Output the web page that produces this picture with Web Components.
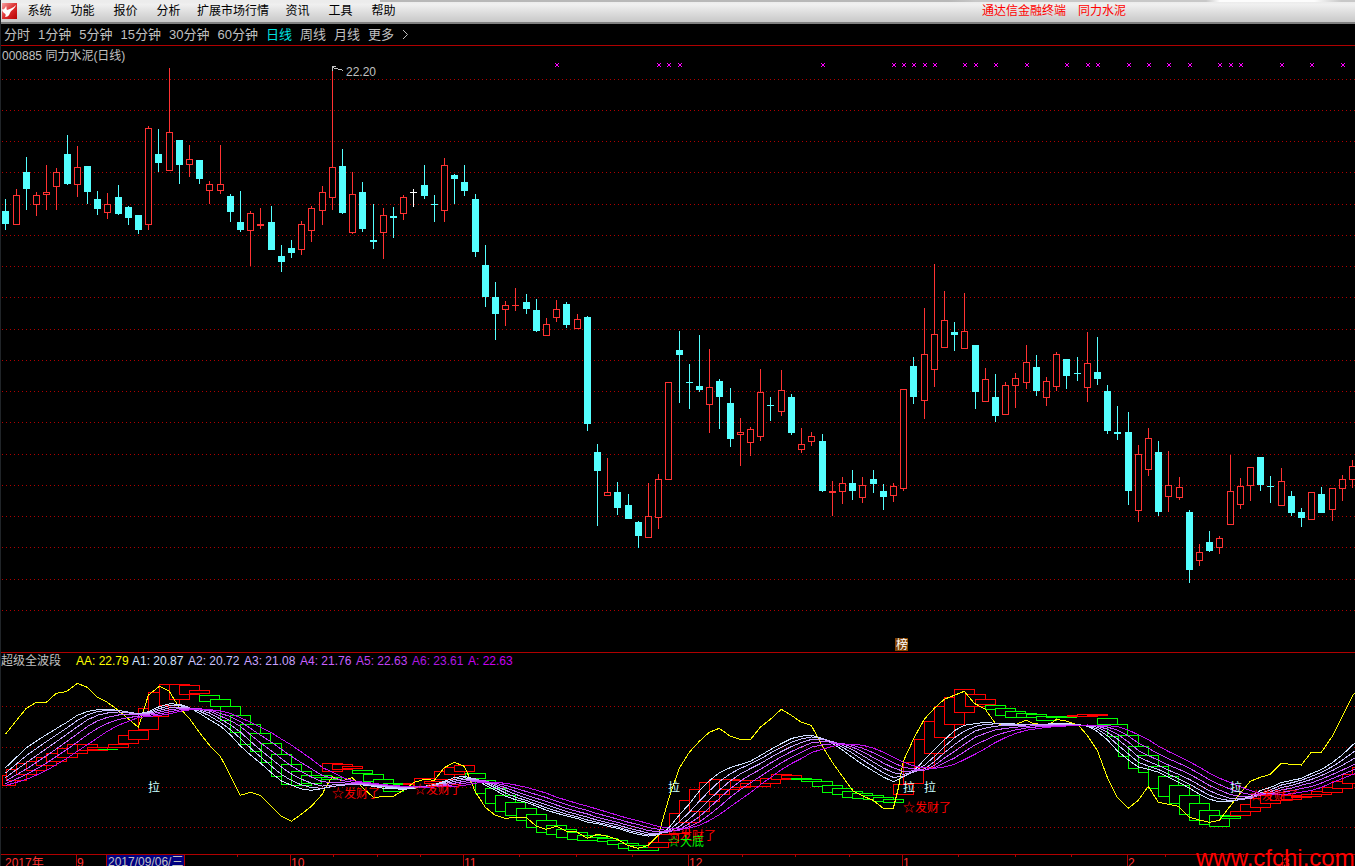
<!DOCTYPE html>
<html lang="zh-CN">
<head>
<meta charset="utf-8">
<title>同力水泥 日线</title>
<style>
html,body{margin:0;height:100%}
body{background:#000;overflow:hidden;font:12px/16px "Liberation Sans","Noto Sans CJK SC",sans-serif;color:#c0c0c0}
</style>
</head>
<body>
<stock-terminal></stock-terminal>

<template id="t-terminal">
<style>
:host{display:flex;flex-direction:column;height:100vh;box-sizing:border-box;border-left:1px solid #202428;overflow:hidden}
main{display:flex;flex-direction:column;flex:1;min-height:0}
kline-pane{flex:none}
wave-pane{flex:1;min-height:0}
</style>
<menu-bar>
  <menu-item>系统</menu-item><menu-item>功能</menu-item><menu-item>报价</menu-item><menu-item>分析</menu-item><menu-item>扩展市场行情</menu-item><menu-item>资讯</menu-item><menu-item>工具</menu-item><menu-item>帮助</menu-item>
  <span slot="title">通达信金融终端</span><span slot="title">同力水泥</span>
</menu-bar>
<period-bar>
  <period-item>分时</period-item><period-item>1分钟</period-item><period-item>5分钟</period-item><period-item>15分钟</period-item><period-item>30分钟</period-item><period-item>60分钟</period-item><period-item active>日线</period-item><period-item>周线</period-item><period-item>月线</period-item><period-item more>更多</period-item>
</period-bar>
<main>
  <kline-pane>000885 同力水泥(日线)</kline-pane>
  <wave-pane>超级全波段</wave-pane>
</main>
</template>

<template id="t-menu">
<style>
:host{display:flex;flex:none;height:24px;box-sizing:border-box;align-items:center;color:#000;border-bottom:2px solid #808080;background:linear-gradient(90deg,#ececec 28%,#b8b8b8 28%,#b8b8b8 70%,#c8c8c8 72%,#c8c8c8 89%,#fcfcfc 90%,#fcfcfc 97%,#c8c8c8 99%) 0 0/100% 2px no-repeat,linear-gradient(#e8e8e8,#f0f0f0 20%,#dcdcdc 60%,#c8c8c8)}
svg{flex:none;width:16px;height:16px;margin-right:1px}
nav{display:flex;flex:1}
.title{display:flex;gap:12px;color:#f00;margin-right:229px;white-space:nowrap}
</style>
<svg viewBox="0 0 16 16" aria-hidden="true"><defs><linearGradient id="lg" x1="0" y1="0" x2="1" y2="1"><stop offset="0" stop-color="#f7a0a0"/><stop offset=".5" stop-color="#dc3030"/><stop offset="1" stop-color="#b80000"/></linearGradient></defs><rect x="1" width="15" height="16" fill="url(#lg)"/><path d="M1 6c1 1 3 0 4-3 1 1 0 3 1 4 3-1 6-2 9-5-1 4-5 5-6 8-1 3-3 4-5 4 1-2 1-3-1-4-1-1-2-2-2-4z" fill="#fff"/></svg>
<nav><slot></slot></nav><div class="title"><slot name="title"></slot></div>
</template>

<template id="t-menuitem">
<style>
:host{display:block}
button{font:inherit;color:inherit;background:none;border:0;margin:0;padding:0 7px;min-width:43px;height:22px;white-space:nowrap}
</style><button type="button"><slot></slot></button>
</template>

<template id="t-period">
<style>
:host{display:flex;flex:none;height:22px;box-sizing:border-box;border-bottom:1px solid #b00000;font-size:13px;padding-left:3px;gap:8px;align-items:center}
</style><slot></slot>
</template>

<template id="t-perioditem">
<style>
:host{display:block}
:host([active]){color:#00e0e0}
button{display:flex;align-items:center;gap:8px;font:inherit;color:inherit;background:none;border:0;margin:0;padding:0;height:20px;white-space:nowrap}
svg{display:none}
:host([more]) svg{display:block}
</style><button type="button"><slot></slot><svg width="7" height="11" viewBox="0 0 7 11" fill="none" stroke="#c0c0c0" aria-hidden="true"><path d="M1 1l4.500 4.500L1 10"/></svg></button>
</template>

<template id="t-kline">
<style>
:host{display:grid;overflow:hidden}
h1{grid-area:1/1;margin:2px 1px;font:inherit;align-self:start;z-index:1}
svg{grid-area:1/1;width:100%;height:606px;display:block;font:inherit}
</style><h1><slot></slot></h1><svg role="img" aria-label="K线图"></svg>
</template>

<template id="t-wave">
<style>
:host{display:grid;grid-template-rows:minmax(0,1fr);overflow:hidden;border-top:1px solid #b00000}
header{grid-area:1/1;display:flex;align-self:start;z-index:1;white-space:nowrap}
h2{margin:0;font:inherit;width:75px}
span{width:56px}
svg{grid-area:1/1;width:100%;height:100%;display:block;font:inherit}
</style><header><h2><slot></slot></h2></header><svg role="img" aria-label="超级全波段指标"></svg>
</template>

<script>
const tpl = id => document.getElementById(id).content.cloneNode(true);
const define = (name, id, ready) => customElements.define(name, class extends HTMLElement {
  constructor() {
    super();
    const root = this.attachShadow({ mode: 'open' });
    root.append(tpl(id));
    if (ready) ready(root);
  }
});

// Column centre of trading day i.
const dayX = i => Math.round(5.3 + 10.2026 * i);
const dots = ys => ys.map(y => `<line x1="2" x2="101%" y1="${y}.5" y2="${y}.5" stroke="#b00000" stroke-dasharray="1 3"/>`).join('');

// One candle per entry: kind (c fall, r rise, w flat), high, body top, body bottom, low.
const candles = `c199,211,224,230 r189,195,225,225 c157,172,189,210 r192,195,205,216 r165,192,195,210 r168,172,187,210 c135,154,184,185 r146,167,185,197 c166,166,192,204 c191,199,209,215
r193,204,213,219 c185,197,214,215 c206,207,218,225 c215,215,230,234 r126,128,225,230 c129,154,163,172 r68,132,171,171 c140,140,165,184 r145,159,165,177 c160,160,179,184
r181,184,191,204 r145,184,191,194 c194,196,212,222 c191,222,230,232 r211,213,231,266 r208,224,226,229 c206,222,250,250 c245,256,262,272 c240,248,253,258 r221,224,250,255
r206,208,231,242 r186,192,211,225 r66,167,198,210 c149,166,213,214 r172,194,233,234 c182,192,229,232 c204,240,242,249 r208,215,233,259 c207,216,218,238 r195,197,214,220
w189,192,193,207 c165,185,196,199 c195,204,205,222 r158,165,211,222 c174,175,179,204 c165,182,191,196 c194,199,252,257 c245,265,297,307 c282,297,314,340 r301,305,310,326
r288,305,306,311 c294,302,309,314 c299,310,331,332 r318,324,336,336 r300,309,318,322 c302,304,325,328 r314,319,329,329 c316,317,424,431 c444,452,471,526 r458,492,496,496
c482,492,508,515 c494,505,519,519 c521,522,536,548 r483,516,538,538 r474,479,518,529 r382,382,480,480 c331,350,355,403 c364,382,383,409 c335,386,390,392 r349,387,405,433
c379,381,397,429 c388,403,439,447 r418,432,435,466 r427,429,443,456 r369,392,437,441 c397,405,406,421 r370,390,412,416 c394,397,433,435 r428,444,450,453 r432,436,442,446
c434,441,491,492 r481,491,493,516 r477,483,492,504 c470,483,491,500 r477,485,498,503 c470,479,484,493 c484,491,497,510 r483,486,496,502 r389,389,489,491 c357,366,397,404
r308,354,401,419 r264,334,370,387 r291,320,348,348 c322,332,335,351 r293,331,349,349 c345,345,392,409 r368,379,402,402 c374,397,416,422 r382,385,415,415 r373,378,386,408
r345,362,383,389 c355,367,391,396 r377,381,398,406 r352,354,387,391 c359,359,376,389 c357,373,374,381 r332,363,388,402 c337,372,379,385 c385,391,431,434 c406,432,434,440
c412,432,491,505 r445,454,511,522 r428,438,470,476 c441,452,512,516 r451,485,497,512 r477,487,498,500 c510,512,570,583 r544,552,561,566 c531,542,551,552 r536,538,548,554
r455,491,525,525 r478,486,505,509 r467,467,486,501 c457,457,485,491 c476,486,487,503 r468,481,506,506 c491,496,513,516 c508,512,518,527 r492,492,520,520 c487,494,513,513
r488,488,510,521 r475,479,489,501 r460,466,480,488`.split(/\s+/).map(s => [s[0], ...s.slice(1).split(',').map(Number)]);
const tint = { c: '#54ffff', r: '#ff3232', w: '#ffffff' };
const marks = [54,64,65,66,80,87,88,89,90,91,94,95,97,100,104,106,107,110,112,114,116,119,120,121,125,128,131];

function drawKline(root) {
  let s = dots([79,110,141,172,204,235,266,297,329,360,391,422,454,485,516,547,579,610]);
  candles.forEach(([k, hi, top, bot, lo], i) => {
    const x = dayX(i), col = tint[k];
    if (k === 'r' && bot - top > 2) {
      s += `<path d="M${x + .5} ${hi}V${top}M${x + .5} ${bot}V${lo}" stroke="${col}"/><rect x="${x - 2.5}" y="${top + .5}" width="6" height="${bot - top - 1}" fill="#000" stroke="${col}"/>`;
    } else {
      s += `<path d="M${x + .5} ${hi}V${lo}" stroke="${col}"/><rect x="${x - 3}" y="${top}" width="7" height="${bot - top}" fill="${col}"/>`;
    }
  });
  for (const i of marks) s += `<path d="M${dayX(i) - 1} 63h1v1h2v-1h1v1h-1v2h1v1h-1v-1h-2v1h-1v-1h1v-2h-1z" fill="#ff00ff"/>`;
  s += `<path d="M343.500 70.500L332.500 67.500M332.500 71V66.500H336" fill="none" stroke="#c0c0c0"/><text x="346" y="76" fill="#c0c0c0">22.20</text>`;
  s += `<rect x="895" y="638" width="13" height="13" fill="#804000"/><text x="896" y="649" fill="#fff">榜</text>`;
  root.querySelector('svg').innerHTML = `<g transform="translate(-1,-46)" shape-rendering="crispEdges">${s}</g>`;
}

// Wave tables are kept at three units per pixel; ox/oy place each section.
const sections = [
  { ox: 0, oy: 1935,
    aa: '16,268 79,190 109,172 139,172 169,145 199,140 232,115 262,127 292,157 322,172 355,196 415,247 430,200 445,151 478,124 508,139 538,188 568,220 600,265 631,304 661,334 691,391 721,451 751,442 781,451 811,481 844,514 874,529 904,508 934,484 967,448',
    f: '16,367 79,307 139,268 199,232 232,210 262,199 292,194 340,193 370,199 415,207 445,200 478,184 508,176 540,178 580,193 620,220 661,244 691,271 721,304 751,331 781,355 811,382 844,409 874,421 904,432 934,436',
    m: '16,397 79,352 139,310 199,268 232,244 262,224 292,210 340,200 370,202 415,208 445,205 478,196 508,188 540,186 580,190 620,200 661,223 691,240 721,262 751,290 781,316 811,340 844,367 874,388 904,403 934,415',
    l: '16,421 79,403 139,376 199,340 262,298 322,258 355,240 415,217 445,214 478,211 508,207 540,198 580,193 620,193 661,198 691,205 721,219 751,232 781,247 811,262 844,283 874,301 904,322 934,343',
    red: '6,391,46,421 19,373,79,406 49,355,109,388 79,349,139,376 109,337,169,361 139,325,199,349 172,310,232,337 202,298,262,325 232,298,292,316 262,307,322,316 262,313,322,316 325,298,385,307 355,271,415,295 385,256,445,283 415,190,475,253 445,142,505,214 478,118,538,181 508,118,568,163 538,121,598,148 568,136,628,145',
    green: '292,313,352,313 598,151,658,169 631,163,691,184 661,184,721,226 691,211,751,262 721,238,781,298 751,265,811,319 784,295,844,352 814,328,874,394 844,358,904,418 874,379,934,421 904,391,964,415 934,391,994,397 964,397,1024,403' },
  { ox: 960, oy: 1935,
    aa: '15,430 37,395 67,408 97,398 130,430 160,457 220,454 250,436 283,412 313,403 343,406 373,368 403,352 433,364 448,397 466,440 496,487 526,511 556,520 590,517 619,517 649,544 679,553 709,544 739,559 769,560 802,580 832,568 862,574 892,583 922,601 955,610',
    f: '0,432 37,424 67,421 97,417 130,420 160,424 190,430 250,433 283,430 313,424 343,418 373,409 403,397 433,394 466,403 496,421 526,436 556,454 590,466 619,472 649,484 679,496 709,505 739,513 769,520 802,532 832,536 862,544 892,550 922,560',
    m: '0,424 37,420 67,418 130,417 160,420 250,428 313,424 343,422 373,416 403,409 433,403 466,403 496,410 526,424 556,436 590,450 619,460 649,470 679,480 709,490 739,500 769,508 802,517 832,526 862,533 892,540 922,549',
    l: '0,365 37,382 67,398 97,407 130,412 160,415 190,419 250,424 313,427 373,425 403,424 433,421 466,414 496,412 526,412 556,415 590,421 619,427 649,436 679,445 709,457 739,466 769,475 802,484 832,493 862,502 892,511 922,520',
    red: '7,355,67,379 37,358,97,373 67,364,127,370 250,415,310,418 283,400,343,424 313,409,373,415 343,379,403,403 373,367,433,388 403,361,463,379',
    green: '97,376,157,385 130,388,190,409 160,403,220,418 190,415,250,439 220,418,280,430 436,385,496,400 466,406,526,445 496,430,556,475 526,451,586,499 556,472,616,511 589,490,649,526 619,508,679,547 649,526,709,562 679,541,739,568 709,553,769,577 742,562,802,583 772,571,832,586 802,571,862,577 832,580,892,589 862,586,922,598 895,595,955,610 925,601,985,616 955,607,1015,616' },
  { ox: 1920, oy: 1935,
    aa: '25,601 55,571 61,550 88,455 118,370 148,322 178,289 208,262 238,250 271,274 301,283 331,284 361,247 391,223 424,193 454,211 484,232 514,241 544,298 577,352 607,394 640,439 670,454 700,466 730,490 760,490 775,430 790,349 823,277 853,223 883,190 913,163 943,151 973,139',
    f: '0,570 30,574 60,568 88,547 118,508 148,475 178,436 208,406 238,382 271,367 301,358 331,348 361,331 391,313 424,295 454,280 484,273 514,271 544,280 577,295 607,316 640,340 670,361 700,379 730,397 760,411 790,395 823,376 853,343 883,313 913,283 943,256 973,240',
    m: '0,558 30,566 60,564 88,560 118,544 148,520 178,493 208,463 238,434 271,406 301,386 331,370 361,355 391,337 424,319 454,304 484,292 514,283 544,283 577,290 607,301 640,316 670,334 700,352 730,370 760,384 790,388 823,380 853,371 883,349 913,322 943,298 973,277',
    l: '0,529 30,538 60,546 88,550 118,552 148,549 178,541 208,526 238,508 271,484 301,463 331,442 361,418 391,397 424,373 454,355 484,340 514,322 544,313 577,304 607,297 640,298 670,301 700,310 730,322 760,337 790,352 823,364 853,369 883,370 913,366 943,358 973,343',
    red: '55,568,115,592 25,592,85,607 88,505,148,565 118,466,178,532 148,433,208,499 178,412,238,469 208,403,268,448 238,403,298,433 271,406,331,427 301,415,361,424 331,406,391,424 361,400,421,415 394,388,454,403 424,391,484,400 760,418,820,448 790,352,850,415 823,283,883,367 853,229,913,325 883,184,943,277 913,157,973,238 943,133,1003,202 976,148,1036,184 1006,163,1066,178',
    green: '454,400,514,403 484,403,544,409 517,409,577,424 547,421,607,442 577,430,637,448 607,439,667,457 637,445,697,460 670,451,730,463 700,457,760,469 730,463,790,472' },
  { ox: 2580, oy: 1890,
    aa: '343,220 376,238 406,280 436,286 450,286 469,283 499,270 520,281 568,284 589,268 622,274 655,286',
    f: '343,281 376,277 406,280 466,282 530,283 570,282 600,280 655,283',
    m: '343,303 376,294 406,288 466,286 530,284 600,284 655,285',
    l: '343,373 376,355 406,337 436,322 466,310 496,301 530,296 560,292 600,289 655,286',
    red: '622,256,682,259 652,253,712,259 682,253,742,256',
    green: '376,226,436,238 406,235,466,256 436,244,496,262 469,250,529,262 499,253,559,262 529,259,589,271 559,259,619,262 592,259,650,262' },
  { ox: 3240, oy: 1935,
    aa: '22,271 52,316 82,397 112,457 145,490 175,466 205,424 235,472 265,478 295,484 328,517 358,525 388,532 418,526 448,487 478,448 511,409 541,397 571,388 604,355 634,358 664,360 694,322 724,322 757,274 787,214 820,148 830,140',
    f: '22,244 52,260 82,286 112,319 145,346 175,367 205,373 235,382 265,397 295,412 328,430 358,448 388,463 418,471 448,470 478,463 511,454 541,436 571,427 604,412 634,406 664,400 694,385 724,373 757,352 787,328 825,292',
    m: '22,242 52,247 82,262 112,283 145,310 175,337 205,350 235,362 265,376 295,388 328,404 358,421 388,438 418,450 448,460 478,462 511,460 541,448 571,440 604,427 634,421 664,412 694,403 724,391 757,376 787,360 825,338',
    l: '22,240 52,241 82,242 112,245 145,256 175,270 205,285 235,304 265,320 295,334 328,351 358,367 388,385 418,400 448,412 478,425 511,437 541,446 571,450 604,449 634,446 664,441 694,436 724,427 757,412 787,400 825,385',
    red: '451,499,511,511 481,478,541,499 511,460,571,487 541,451,601,475 571,448,631,466 604,451,664,463 634,454,694,457 664,448,724,454 694,439,754,448 727,427,787,442 757,409,817,430 787,388,847,415 817,367,877,388',
    green: '52,220,112,238 82,238,142,274 115,271,175,334 145,304,205,370 175,331,235,382 205,364,265,430 235,394,295,454 268,421,328,475 298,451,358,508 328,475,388,526 358,496,418,538 388,511,448,544 421,514,481,520' }
];
const series = key => sections.flatMap(c => c[key].split(' ').map(p => p.split(',').map(Number)).map(([x, y]) => [(x + c.ox) / 3, (y + c.oy) / 3]));
const boxes = key => sections.flatMap(c => c[key].split(' ').map(p => p.split(',').map(Number)).map(([a, b, d, e]) => [Math.floor((a + c.ox) / 3), Math.floor((b + c.oy) / 3), Math.floor((d + c.ox) / 3), Math.floor((e + c.oy) / 3)]));
const at = (pts, x) => {
  let j = 1;
  while (j < pts.length - 1 && pts[j][0] < x) j++;
  const [x0, y0] = pts[j - 1], [x1, y1] = pts[j];
  return y0 + (y1 - y0) * (x - x0) / (x1 - x0);
};
const readings = [['AA: 22.79', '#ffff00'], ['A1: 20.87', '#d0e0ff'], ['A2: 20.72', '#c8c0ff'], ['A3: 21.08', '#c8a0ff'], ['A4: 21.76', '#c860ff'], ['A5: 22.63', '#c040f0'], ['A6: 23.61', '#b018e0'], ['A: 22.63', '#c800f0']];
const lineTint = ['#d0e0ff', '#c8c0ff', '#c8a0ff', '#c860ff', '#c840ff', '#c010f0'];

function drawWave(root) {
  const header = root.querySelector('header');
  for (const [t, c] of readings) {
    const e = document.createElement('span');
    e.textContent = t; e.style.color = c; header.append(e);
  }
  let s = dots([706, 747, 787, 827]);
  // Each step box covers the earlier ones it overlaps.
  const steps = [...boxes('red').map(b => [...b, '#ff0000']), ...boxes('green').map(b => [...b, '#00ff00'])].sort((p, q) => p[0] - q[0]);
  for (const [a, b, d, e, col] of steps) s += `<path fill="#000" stroke="${col}" d="M${a + .5} ${b + .5}H${d + .5}V${e + .5}H${a + .5}Z"/>`;
  s += `<polyline fill="none" stroke="#ffff00" points="${series('aa').map(p => p.map(v => v.toFixed(1))).join(' ')}"/>`;
  const f = series('f'), m = series('m'), l = series('l');
  for (let k = 0; k < 6; k++) {
    const t = k / 5, pts = [];
    for (let i = 0; i < 134; i++) {
      const x = dayX(i), a = at(f, x), b = at(m, x), c = at(l, x);
      const y = a * (t - .4) * (t - 1) / .4 + b * t * (t - 1) / -.24 + c * t * (t - .4) / .6;
      pts.push(x + '.5,' + y.toFixed(1));
    }
    s += `<polyline fill="none" stroke="${lineTint[k]}" points="${pts.join(' ')}"/>`;
  }
  const say = (x, y, c, t) => { s += `<text x="${x}" y="${y}" fill="${c}">${t}</text>`; };
  for (const x of [148, 668, 903, 924, 1230]) say(x, 792, '#ccffff', '拉');
  for (const [x, y] of [[332, 798], [414, 794], [668, 840], [903, 812], [1250, 800]]) say(x, y, '#ff0000', '☆发财了');
  say(668, 846, '#00ff00', '☆大底');
  s += `<path stroke="#b00000" d="M0 854.500H4000${[76, 290, 463, 688, 902, 1127, 1282].map(x => `M${x}.5 855V900`).join('')}${[237, 333, 377, 420, 519, 576, 632, 742, 795, 849, 958, 1015, 1071, 1165, 1204, 1243, 1336].map(x => `M${x}.5 855V857`).join('')}"/>`;
  s += `<rect x="106.500" y="854.500" width="78" height="20" fill="#000080" stroke="#b00000"/>`;
  for (const [x, t] of [[5, '2017年'], [77, '9'], [291, '10'], [464, '11'], [689, '12'], [903, '1'], [1128, '2'], [1283, '3']]) say(x, 867, '#ff3232', t);
  say(108, 866, '#c0c0c0', '2017/09/06/三');
  s += `<text x="1196" y="866" fill="#ff0000" font-size="24">www.cfchi.com</text>`;
  root.querySelector('svg').innerHTML = `<g transform="translate(-1,-653)" shape-rendering="crispEdges">${s}</g>`;
}

define('menu-item', 't-menuitem');
define('menu-bar', 't-menu');
define('period-item', 't-perioditem');
define('period-bar', 't-period');
define('kline-pane', 't-kline', drawKline);
define('wave-pane', 't-wave', drawWave);
define('stock-terminal', 't-terminal');
</script>
</body>
</html>
